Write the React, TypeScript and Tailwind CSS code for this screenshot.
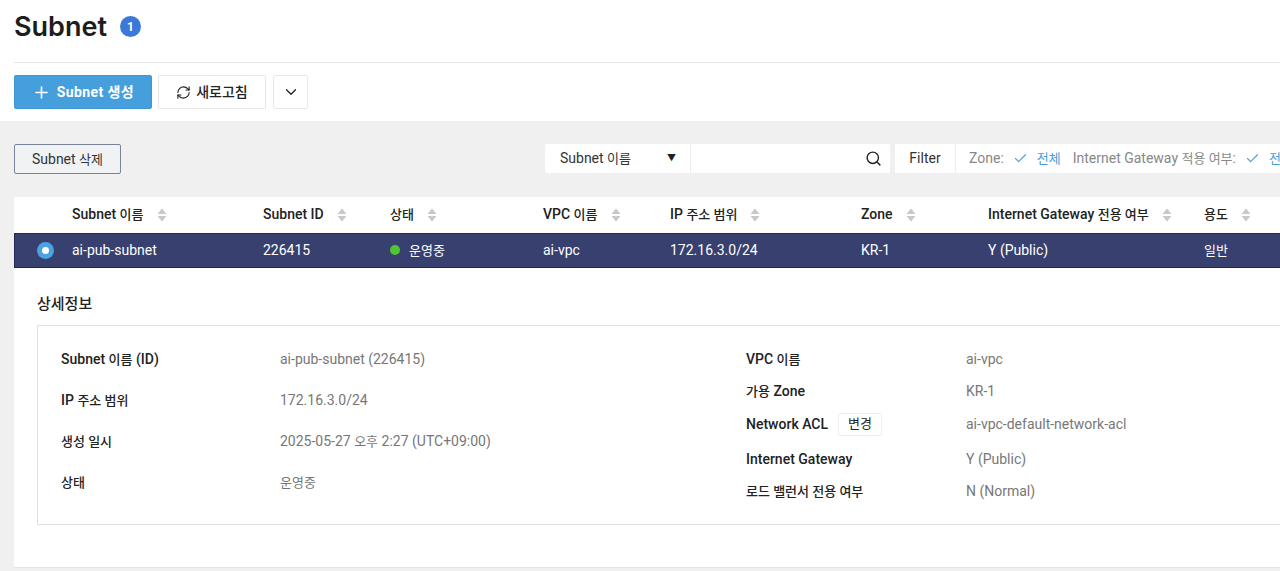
import { Check, ChevronDown, Plus, RefreshCw, Search } from "lucide-react";

const font = { fontFamily: "Roboto, 'Noto Sans CJK KR', sans-serif" };

const columns = [
  { label: "Subnet 이름", value: "ai-pub-subnet" },
  { label: "Subnet ID", value: "226415" },
  { label: "상태", value: "운영중" },
  { label: "VPC 이름", value: "ai-vpc" },
  { label: "IP 주소 범위", value: "172.16.3.0/24" },
  { label: "Zone", value: "KR-1" },
  { label: "Internet Gateway 전용 여부", value: "Y (Public)" },
  { label: "용도", value: "일반" },
];

const gridCols = "grid grid-cols-[58px_191px_127px_153px_127px_191px_127px_216px_1fr]";

// Hangul runs sit a size below the latin text, same as the original page's font pairing
function T({ text, ko = "text-[13px]" }: { text: string; ko?: string }) {
  return (
    <>
      {text.split(/([\uAC00-\uD7A3]+(?: [\uAC00-\uD7A3]+)*)/).map((part, i) =>
        i % 2 === 1 ? (
          <span key={i} className={ko}>
            {part}
          </span>
        ) : (
          part
        ),
      )}
    </>
  );
}

function SortMark() {
  return (
    <svg width="10" height="14" viewBox="0 0 10 14" className="ml-[13px] shrink-0">
      <path d="M5 0.5L9.5 6H0.5Z" fill="#c8c8c8" />
      <path d="M5 13.5L9.5 8H0.5Z" fill="#c8c8c8" />
    </svg>
  );
}

function TableBlock() {
  return (
    <div className="bg-white">
      <div className={`${gridCols} h-[36px] items-center pb-[1px]`}>
        <div />
        {columns.map((c) => (
          <div key={c.label} className="flex items-center text-[14px] font-medium text-[#222] whitespace-nowrap">
            <span>
              <T text={c.label} />
            </span>
            <SortMark />
          </div>
        ))}
      </div>
      <div className={`${gridCols} h-[35px] items-center bg-[#37406f] border-y border-l border-[#1f2a55] pb-[1px] text-[14px] text-white`}>
        <div className="flex justify-center pl-[3px]">
          <span className="flex h-[17px] w-[17px] items-center justify-center rounded-full bg-[#4ba3e3]">
            <span className="h-[7px] w-[7px] rounded-full bg-white" />
          </span>
        </div>
        {columns.map((c) => (
          <div key={c.label} className="-ml-px flex items-center whitespace-nowrap">
            {c.value === "운영중" && <span className="mr-[9px] h-[10px] w-[10px] rounded-full bg-[#4ec62f]" />}
            <span>
              <T text={c.value} />
            </span>
          </div>
        ))}
      </div>
    </div>
  );
}

function InfoRow({ label, value, h, width, extra }: { label: string; value: string; h: string; width: string; extra?: boolean }) {
  return (
    <div className={`flex items-center ${h}`}>
      <div className={`flex ${width} items-center text-[14px] font-medium text-[#222] whitespace-nowrap`}>
        <span>
          <T text={label} />
        </span>
        {extra && (
          <span className="ml-[10px] flex h-[23px] w-[44px] items-center justify-center rounded-[2px] border border-[#eeeeee] text-[13px] font-normal">
            변경
          </span>
        )}
      </div>
      <div className="text-[14px] text-[#777] whitespace-nowrap">
        <T text={value} />
      </div>
    </div>
  );
}

export default function App() {
  return (
    <div className="h-[571px] w-[1280px] overflow-hidden bg-[#f0f0f0]" style={font}>
      {/* title + actions */}
      <div className="h-[121px] bg-white pl-[14px]">
        <div className="flex h-[63px] items-start border-b border-[#e6e6e6]">
          <h1 className="mt-[9px] text-[27px] leading-[36px] font-semibold text-[#1d1d1d]" style={{ fontFamily: "Inter, 'Noto Sans CJK KR', sans-serif" }}>
            Subnet
          </h1>
          <span className="ml-[13px] mt-[16px] flex h-[21px] w-[21px] items-center justify-center rounded-full bg-[#3b78d8] text-[12px] font-bold text-white">
            1
          </span>
        </div>
        <div className="mt-[12px] flex">
          <button className="flex h-[34px] w-[138px] items-center justify-center rounded-[2px] border border-[#3f97d2] bg-[#459fdc] text-[14px] font-bold tracking-[0.4px] text-white">
            <Plus size={19} strokeWidth={2} className="mr-[6px]" />
            Subnet 생성
          </button>
          <button className="ml-[6px] flex h-[34px] w-[108px] items-center justify-center rounded-[2px] border border-[#e8e8e8] bg-white text-[14px] font-medium text-[#222]">
            <RefreshCw size={15} strokeWidth={1.75} className="mr-[5px]" />
            새로고침
          </button>
          <button className="ml-[7px] flex h-[34px] w-[35px] items-center justify-center rounded-[2px] border border-[#e8e8e8] bg-white text-[#222]">
            <ChevronDown size={18} strokeWidth={1.75} />
          </button>
        </div>
      </div>

      {/* list controls */}
      <div className="flex h-[76px] items-start pl-[14px] pt-[23px]">
        <button className="h-[30px] w-[107px] shrink-0 rounded-[2px] border border-[#7a8499] bg-[#f1f2f4] text-[14px] text-[#333]">
          <T text="Subnet 삭제" />
        </button>
        <div className="ml-[424px] flex h-[29px] w-[345px] shrink-0 rounded-[2px] bg-white">
          <div className="flex w-[146px] items-center justify-between border-r border-[#eeeeee] pl-[15px] pr-[14px] text-[14px] text-[#333]">
            <span>
              <T text="Subnet 이름" />
            </span>
            <span className="text-[9px] text-[#222]">▼</span>
          </div>
          <div className="flex flex-1 items-center justify-end pr-[8px]">
            <Search size={17} strokeWidth={2} className="text-[#222]" />
          </div>
        </div>
        <div className="ml-[5px] flex h-[29px] shrink-0 bg-white text-[14px] whitespace-nowrap">
          <div className="flex w-[61px] shrink-0 items-center justify-center border-r border-[#eeeeee] text-[#333]">Filter</div>
          <div className="flex items-center pl-[13px] pr-[20px] text-[#888]">
            Zone:
            <Check size={15} strokeWidth={1.75} className="ml-[9px] mr-[9px] text-[#459fdc]" />
            <span className="text-[13px] text-[#459fdc]">전체</span>
            <span className="ml-[12px]">
              <T text="Internet Gateway 적용 여부:" />
            </span>
            <Check size={15} strokeWidth={1.75} className="ml-[9px] mr-[9px] text-[#459fdc]" />
            <span className="text-[13px] text-[#459fdc]">전체</span>
          </div>
        </div>
      </div>

      {/* table and detail */}
      <div className="ml-[14px]">
        <TableBlock />
        <div className="h-[300px] w-[1290px] border-b border-[#e4e4e4] bg-white pl-[23px] pt-[26px]">
          <h2 className="text-[15px] leading-[20px] font-medium text-[#222]">상세정보</h2>
          <div className="mt-[11px] flex h-[200px] border border-[#e0e0e0] pl-[23px]">
            <div className="w-[685px] pt-[13px]">
              <InfoRow label="Subnet 이름 (ID)" value="ai-pub-subnet (226415)" h="h-[41px]" width="w-[219px]" />
              <InfoRow label="IP 주소 범위" value="172.16.3.0/24" h="h-[41px]" width="w-[219px]" />
              <InfoRow label="생성 일시" value="2025-05-27 오후 2:27 (UTC+09:00)" h="h-[41px]" width="w-[219px]" />
              <InfoRow label="상태" value="운영중" h="h-[41px]" width="w-[219px]" />
            </div>
            <div className="flex-1 pt-[17px]">
              <InfoRow label="VPC 이름" value="ai-vpc" h="h-[32px]" width="w-[220px]" />
              <InfoRow label="가용 Zone" value="KR-1" h="h-[32px]" width="w-[220px]" />
              <InfoRow label="Network ACL" value="ai-vpc-default-network-acl" h="h-[34px]" width="w-[220px]" extra />
              <InfoRow label="Internet Gateway" value="Y (Public)" h="h-[36px]" width="w-[220px]" />
              <InfoRow label="로드 밸런서 전용 여부" value="N (Normal)" h="h-[28px]" width="w-[220px]" />
            </div>
          </div>
        </div>
      </div>
    </div>
  );
}
